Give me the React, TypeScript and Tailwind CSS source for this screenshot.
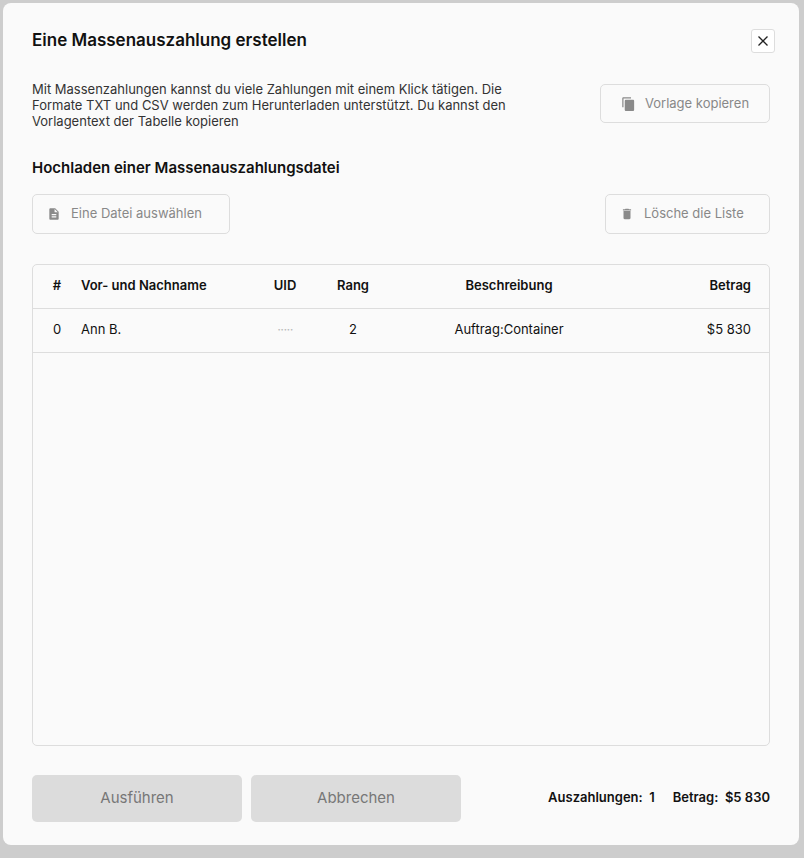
import React from "react";

const FileIcon = () => (
  <svg width="14" height="16" viewBox="0 0 24 24" fill="#8a8a8a"><path d="M14 2H6c-1.1 0-2 .9-2 2v16c0 1.1.9 2 2 2h12c1.1 0 2-.9 2-2V8l-6-6zm2 16H8v-2h8v2zm0-4H8v-2h8v2zm-3-5V3.5L18.5 9H13z"/></svg>
);
const CopyIcon = () => (
  <svg width="15" height="16" viewBox="0 0 24 24" fill="#8a8a8a"><path d="M16 1H4c-1.1 0-2 .9-2 2v14h2V3h12V1zm3 4H8c-1.1 0-2 .9-2 2v14c0 1.1.9 2 2 2h11c1.1 0 2-.9 2-2V7c0-1.1-.9-2-2-2z"/></svg>
);
const TrashIcon = () => (
  <svg width="14" height="16" viewBox="0 0 24 24" fill="#8a8a8a"><path d="M6 19c0 1.1.9 2 2 2h8c1.1 0 2-.9 2-2V7H6v12zM19 4h-3.5l-1-1h-5l-1 1H5v2h14V4z"/></svg>
);

export default function App() {
  return (
    <div className="w-[804px] h-[858px] bg-[#cdcdcd] pt-[3px] pl-[3px]" style={{ fontFamily: "Inter, 'Noto Sans', sans-serif" }}>
      <div className="w-[796px] h-[842px] bg-[#fafafa] rounded-[8px] px-[29px] pt-[24px] flex flex-col">
        <div className="flex items-center justify-between h-[28px]">
          <h1 className="text-[17px] font-semibold text-[#111]">Eine Massenauszahlung erstellen</h1>
          <button className="w-[24px] h-[24px] mr-[-5px] border border-[#ddd] rounded-[3px] flex items-center justify-center bg-white">
            <svg width="12" height="12" viewBox="0 0 12 12" stroke="#222" strokeWidth="1.3"><path d="M1.5 1.5l9 9M10.5 1.5l-9 9"/></svg>
          </button>
        </div>
        <div className="flex justify-between items-start mt-[26px]">
          <p className="text-[13px] leading-[16px] text-[#333] w-[520px]">Mit Massenzahlungen kannst du viele Zahlungen mit einem Klick tätigen. Die Formate TXT und CSV werden zum Herunterladen unterstützt. Du kannst den Vorlagentext der Tabelle kopieren</p>
          <button className="w-[170px] h-[39px] mt-[3px] border border-[#ddd] rounded-[5px] flex items-center justify-center gap-[9px] text-[13px] text-[#888]"><CopyIcon />Vorlage kopieren</button>
        </div>
        <h2 className="text-[15px] font-semibold text-[#111] mt-[28px]">Hochladen einer Massenauszahlungsdatei</h2>
        <div className="flex justify-between mt-[14px]">
          <button className="w-[198px] h-[40px] border border-[#ddd] rounded-[5px] flex items-center pl-[14px] gap-[10px] text-[13px] text-[#888]"><FileIcon />Eine Datei auswählen</button>
          <button className="w-[165px] h-[40px] border border-[#ddd] rounded-[5px] flex items-center pl-[14px] gap-[10px] text-[13px] text-[#888]"><TrashIcon />Lösche die Liste</button>
        </div>
        <div className="mt-[30px] h-[482px] border border-[#ddd] rounded-[5px] text-[13px] text-[#111]">
          <div className="grid grid-cols-[48px_170px_68px_68px_244px_1fr] h-[44px] items-center border-b border-[#ddd] font-semibold">
            <div className="text-center">#</div>
            <div>Vor- und Nachname</div>
            <div className="text-center">UID</div>
            <div className="text-center">Rang</div>
            <div className="text-center">Beschreibung</div>
            <div className="text-right pr-[18px]">Betrag</div>
          </div>
          <div className="grid grid-cols-[48px_170px_68px_68px_244px_1fr] h-[44px] items-center border-b border-[#ddd]">
            <div className="text-center">0</div>
            <div>Ann B.</div>
            <div className="text-center text-[#bbb] tracking-tighter">·····</div>
            <div className="text-center">2</div>
            <div className="text-center">Auftrag:Container</div>
            <div className="text-right pr-[18px]">$5 830</div>
          </div>
        </div>
        <div className="flex items-center mt-[29px]">
          <button className="w-[210px] h-[47px] bg-[#dcdcdc] rounded-[5px] text-[15px] text-[#777]">Ausführen</button>
          <button className="w-[210px] h-[47px] ml-[9px] bg-[#dcdcdc] rounded-[5px] text-[15px] text-[#777]">Abbrechen</button>
          <div className="ml-auto text-[13px] font-semibold text-[#111] flex gap-[18px]">
            <span>Auszahlungen:&nbsp; 1</span><span>Betrag:&nbsp; $5 830</span>
          </div>
        </div>
      </div>
    </div>
  );
}
